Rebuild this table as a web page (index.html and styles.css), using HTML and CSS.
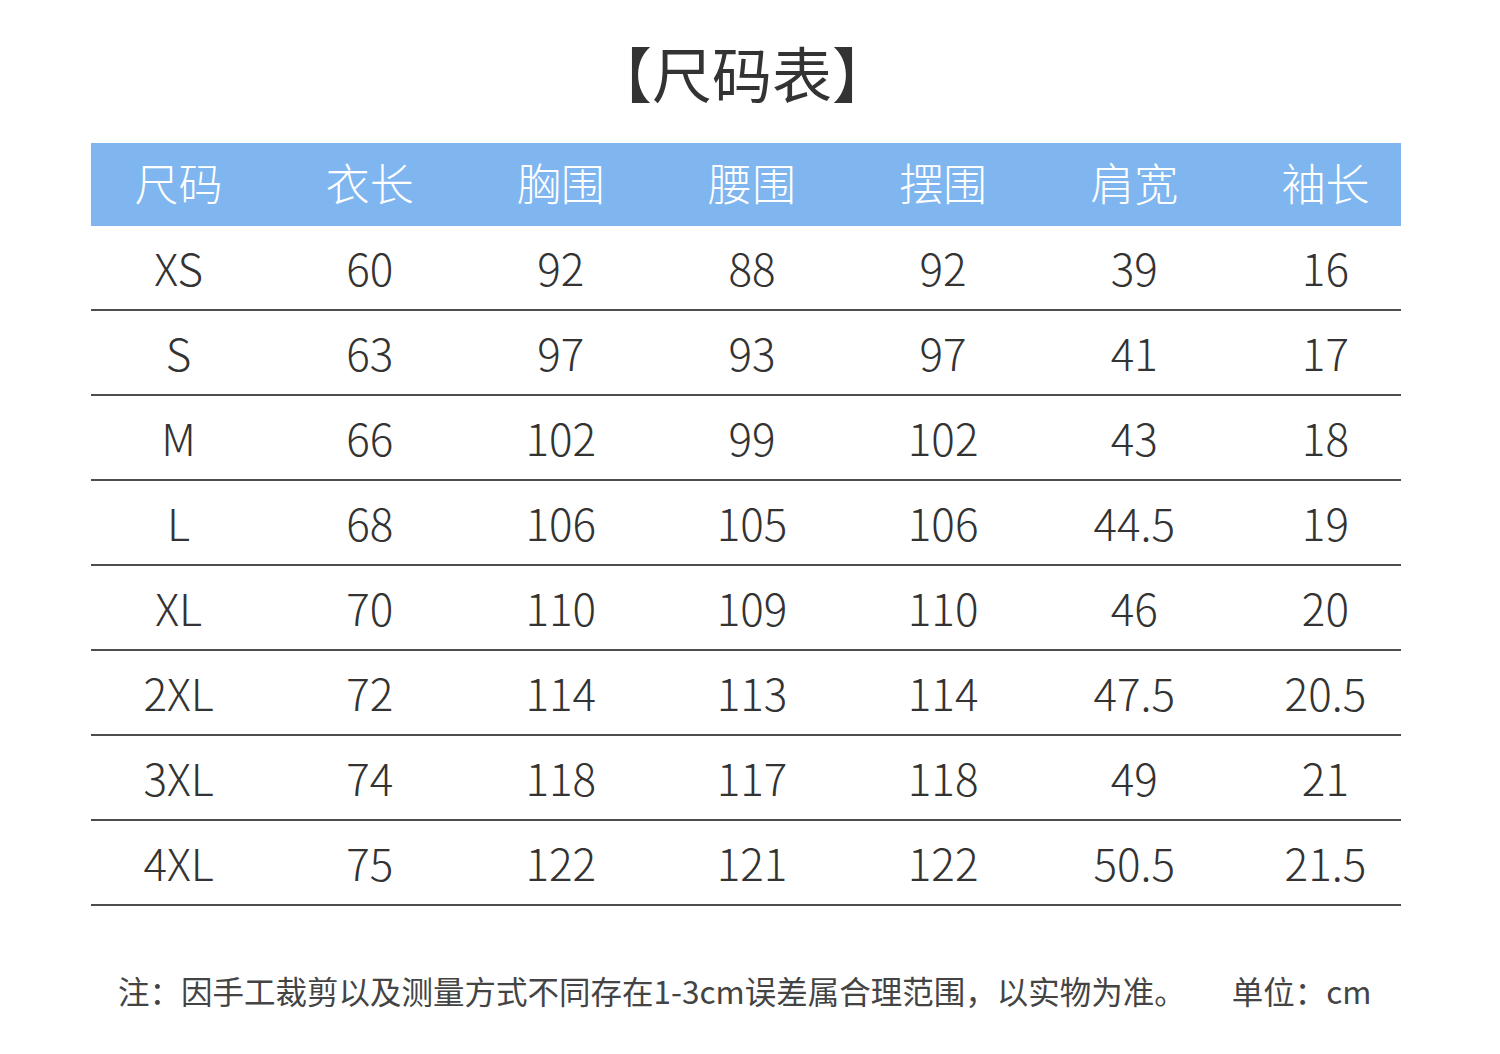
FILE: index.html
```html
<!DOCTYPE html>
<html lang="zh-CN">
<head>
<meta charset="utf-8">
<title>尺码表</title>
<link rel="stylesheet" href="styles.css">
</head>
<body>
<div class="page">
  <h1 class="title">【尺码表】</h1>
  <div class="table">
    <div class="row head">
      <div class="cells"><span>尺码</span><span>衣长</span><span>胸围</span><span>腰围</span><span>摆围</span><span>肩宽</span><span>袖长</span></div>
    </div>
    <div class="row"><div class="cells"><span>XS</span><span>60</span><span>92</span><span>88</span><span>92</span><span>39</span><span>16</span></div></div>
    <div class="row"><div class="cells"><span>S</span><span>63</span><span>97</span><span>93</span><span>97</span><span>41</span><span>17</span></div></div>
    <div class="row"><div class="cells"><span>M</span><span>66</span><span>102</span><span>99</span><span>102</span><span>43</span><span>18</span></div></div>
    <div class="row"><div class="cells"><span>L</span><span>68</span><span>106</span><span>105</span><span>106</span><span>44.5</span><span>19</span></div></div>
    <div class="row"><div class="cells"><span>XL</span><span>70</span><span>110</span><span>109</span><span>110</span><span>46</span><span>20</span></div></div>
    <div class="row"><div class="cells"><span>2XL</span><span>72</span><span>114</span><span>113</span><span>114</span><span>47.5</span><span>20.5</span></div></div>
    <div class="row"><div class="cells"><span>3XL</span><span>74</span><span>118</span><span>117</span><span>118</span><span>49</span><span>21</span></div></div>
    <div class="row"><div class="cells"><span>4XL</span><span>75</span><span>122</span><span>121</span><span>122</span><span>50.5</span><span>21.5</span></div></div>
  </div>
  <div class="note">
    <span class="note-text">注：因手工裁剪以及测量方式不同存在1-3cm误差属合理范围，以实物为准。</span>
    <span class="unit">单位：cm</span>
  </div>
</div>
</body>
</html>
```

FILE: styles.css
```css
html, body {
  margin: 0;
  padding: 0;
  background: #ffffff;
}

body {
  font-family: "Noto Sans CJK SC", "Noto Sans", sans-serif;
  color: #333333;
}

.page {
  width: 1500px;
  padding-top: 37px;
}

.title {
  margin: 0;
  padding-right: 16px;
  font-size: 60px;
  font-weight: 400;
  line-height: 70px;
  text-align: center;
  color: #333333;
}

.table {
  width: 1310px;
  margin: 36px 0 0 91px;
}

.row {
  height: 83px;
  border-bottom: 2px solid #4d4d4d;
}

.row.head {
  height: 83px;
  border-bottom: 0;
  background: #80b6f0;
  color: #ffffff;
}

.cells {
  display: grid;
  grid-template-columns: repeat(7, 1fr);
  margin: 0 -20px 0 -8px;
  height: 100%;
  align-items: center;
  text-align: center;
  font-size: 44px;
  font-weight: 300;
  line-height: 1;
}

.head .cells span {
  padding-bottom: 6px;
}

.row:not(.head) .cells span {
  padding-bottom: 2px;
}

.note {
  display: flex;
  align-items: center;
  margin: 62px 0 0 118px;
  font-size: 31.5px;
  line-height: 44px;
  color: #444444;
}

.unit {
  margin-left: 46px;
}
```
